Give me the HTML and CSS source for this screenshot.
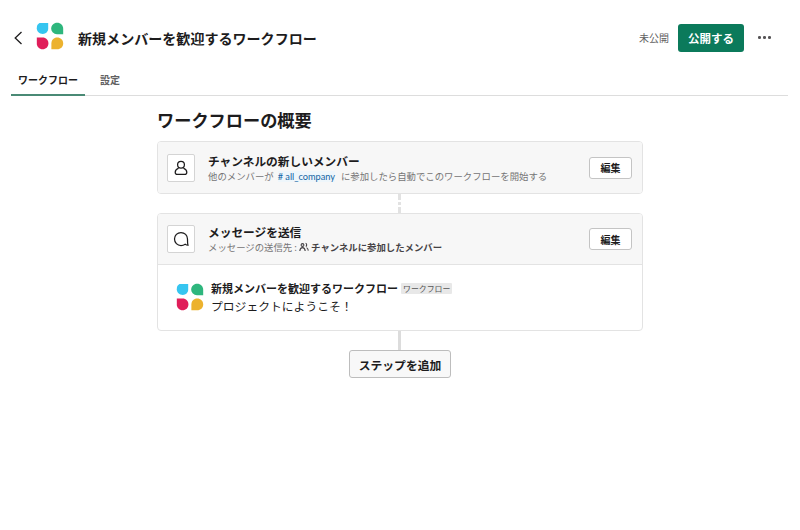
FILE: index.html
```html
<!DOCTYPE html>
<html lang="ja">
<head>
<meta charset="utf-8">
<title>ワークフロー</title>
<link rel="stylesheet" href="styles.css">
</head>
<body>
<svg class="defs" width="0" height="0" aria-hidden="true">
  <symbol id="logo" viewBox="0 0 28 28">
    <path d="M3.5 1H12.2V6.5C12.2 9.7 9.8 11.9 6.8 11.9C3.3 11.9 .8 9.5 .8 6.3C.8 3.7 1.5 2.1 3.5 1Z" fill="#36c5f0"/>
    <path d="M21.2 .8C24.6 .8 27.2 3.4 27.2 6.8V12.2H21C17.6 12.2 15.2 9.6 15.2 6.6C15.2 3.2 17.8 .8 21.2 .8Z" fill="#2eb67d"/>
    <path d="M.8 15.6H6.6C10 15.6 12.4 18.2 12.4 21.4C12.4 24.8 9.8 27.2 6.6 27.2C3.2 27.2 .8 24.6 .8 21.4Z" fill="#e01e5a"/>
    <path d="M21.2 15.6C24.6 15.6 27.2 18.2 27.2 21.4C27.2 24.8 24.6 27.2 21.2 27.2H15.4V21.4C15.4 18.2 17.8 15.6 21.2 15.6Z" fill="#ecb22e"/>
  </symbol>
</svg>

<header class="top">
  <svg class="back" width="10" height="16" viewBox="0 0 10 16"><path d="M8.5 2 2.2 8 8.5 14" fill="none" stroke="#1d1c1d" stroke-width="1.3"/></svg>
  <svg class="logo"><use href="#logo"/></svg>
  <h1 class="title">新規メンバーを歓迎するワークフロー</h1>
  <span class="status">未公開</span>
  <button class="publish">公開する</button>
  <span class="more"><i></i><i></i><i></i></span>
</header>

<nav class="tabs">
  <span class="tab active">ワークフロー</span>
  <span class="tab">設定</span>
</nav>

<main class="content">
  <h2 class="heading">ワークフローの概要</h2>

  <section class="card">
    <div class="step">
      <span class="step-icon">
        <svg width="16" height="16" viewBox="0 0 16 16" fill="none" stroke="#1d1c1d" stroke-width="1.25"><circle cx="8" cy="4.8" r="3.4"/><path d="M5.6 8.1C3.6 9 2.2 10.4 2.2 12.2C2.2 13.6 3 14.4 4.2 14.4H11.8C13 14.4 13.8 13.6 13.8 12.2C13.8 10.4 12.4 9 10.4 8.1"/></svg>
      </span>
      <div class="step-text">
        <div class="step-title">チャンネルの新しいメンバー</div>
        <div class="step-sub">他のメンバーが<a class="channel"># all_company</a>に参加したら自動でこのワークフローを開始する</div>
      </div>
      <button class="edit">編集</button>
    </div>
  </section>

  <div class="link dotted"></div>

  <section class="card">
    <div class="step bordered">
      <span class="step-icon">
        <svg width="16" height="16" viewBox="0 0 16 16" fill="none" stroke="#1d1c1d" stroke-width="1.25"><path d="M12.2 13.2C11 14 9.6 14.5 8 14.5C4.3 14.5 1.5 11.6 1.5 8C1.5 4.4 4.3 1.5 8 1.5C11.7 1.5 14.5 4.4 14.5 8C14.5 9.8 14.4 12.4 15 14.2C14 14.2 13 13.8 12.2 13.2Z"/></svg>
      </span>
      <div class="step-text">
        <div class="step-title">メッセージを送信</div>
        <div class="step-sub">メッセージの送信先 :
          <svg class="people" width="10" height="10" viewBox="0 0 10 10" fill="none" stroke="#454245" stroke-width="1.1"><circle cx="3.5" cy="3" r="1.4"/><path d="M.8 9C1 6.8 2 5.6 3.5 5.6C5 5.6 6 6.8 6.2 9M6.6 1.2C8 1.6 8 4 6.8 4.6M7.6 5.6C8.6 6.2 9.2 7.4 9.3 8.6"/></svg>
          <b>チャンネルに参加したメンバー</b></div>
      </div>
      <button class="edit">編集</button>
    </div>
    <div class="message">
      <svg class="msg-logo"><use href="#logo"/></svg>
      <div class="msg-body">
        <div class="msg-head"><b class="msg-name">新規メンバーを歓迎するワークフロー</b><span class="badge">ワークフロー</span></div>
        <div class="msg-text">プロジェクトにようこそ！</div>
      </div>
    </div>
  </section>

  <div class="link"></div>
  <button class="add">ステップを追加</button>
</main>
</body>
</html>
```
FILE: styles.css
```css
* { box-sizing: border-box; }
html, body { margin: 0; padding: 0; }
body {
  width: 800px;
  height: 530px;
  overflow: hidden;
  background: #fff;
  color: #1d1c1d;
  font-family: "Noto Sans CJK JP", "Noto Sans", sans-serif;
}
.defs { position: absolute; }
button { font-family: inherit; cursor: pointer; }

.top {
  display: flex;
  align-items: center;
  height: 75px;
  padding: 0 28px 0 13px;
}
.back { margin-right: 13px; flex: none; }
.logo { width: 28px; height: 28px; margin: 0 14px 4px 0; flex: none; }
.title { flex: 1; margin: 0; font-size: 14.06px; font-weight: 700; line-height: 20px; }
.status { font-size: 10px; color: #616061; margin-right: 9px; }
.publish {
  width: 66px;
  height: 28px;
  margin-right: 14px;
  padding: 0;
  border: 0;
  border-radius: 3px;
  background: #0b7a5b;
  color: #fff;
  font-size: 11.5px;
  font-weight: 700;
}
.more { display: flex; gap: 2.6px; width: 14px; }
.more i { width: 2.6px; height: 2.6px; border-radius: 50%; background: #555355; flex: none; }

.tabs {
  display: flex;
  gap: 8px;
  width: 777px;
  height: 21px;
  margin-left: 11px;
  border-bottom: 1px solid #dddddd;
}
.tab {
  height: 21px;
  padding: 0 7px;
  font-size: 10px;
  font-weight: 700;
  line-height: 10px;
  color: #616061;
}
.tab.active { color: #1d1c1d; border-bottom: 2px solid #4a8a75; }

.content {
  display: flex;
  flex-direction: column;
  align-items: center;
  width: 486px;
  margin-left: 157px;
}
.heading {
  align-self: flex-start;
  margin: 11px 0 9px;
  font-size: 17.2px;
  line-height: 25px;
  font-weight: 700;
}
.card {
  width: 486px;
  border: 1px solid #e3e3e3;
  border-radius: 4px;
  overflow: hidden;
  background: #fff;
}
.step {
  display: flex;
  align-items: center;
  height: 51px;
  padding: 0 9px;
  background: #f7f7f7;
}
.step.bordered { border-bottom: 1px solid #e3e3e3; }
.step-icon {
  display: flex;
  align-items: center;
  justify-content: center;
  width: 28px;
  height: 28px;
  margin-right: 13px;
  border: 1px solid #d4d4d4;
  border-radius: 2px;
  background: #fff;
  flex: none;
}
.step-text { flex: 1; min-width: 0; }
.step-title { font-size: 11.7px; font-weight: 700; line-height: 15px; }
.step-sub { margin-top: 2px; font-size: 9.4px; line-height: 13px; color: #757475; white-space: nowrap; }
.step-sub b { color: #454245; font-weight: 700; }
.channel { margin: 0 6px 0 4px; color: #1264a3; background: #eef6fb; font-family: Lato, sans-serif; font-size: 9.2px; }
.people { vertical-align: -1px; }
.edit {
  width: 43px;
  height: 22px;
  margin-right: 1px;
  padding: 0;
  border: 1px solid #c4c4c4;
  border-radius: 3px;
  background: #fff;
  color: #1d1c1d;
  font-size: 10px;
  font-weight: 700;
}

.link { width: 3px; height: 19px; margin-right: 1px; background: #dcdcdc; flex: none; }
.link.dotted {
  background: linear-gradient(#e2e2e2 0 6px, #fff 6px 8px, #e2e2e2 8px 11px, #fff 11px 13px, #e2e2e2 13px 19px);
}

.message {
  display: flex;
  height: 65px;
  padding: 19px 19px 0 18px;
}
.msg-logo { width: 28px; height: 28px; margin: -1px 7px 0 0; flex: none; }
.msg-head { display: flex; align-items: center; height: 11px; margin-top: -1px; }
.msg-name { font-size: 11px; font-weight: 700; line-height: 11px; }
.badge {
  margin-left: 3px;
  padding: 0 2px;
  height: 11px;
  border-radius: 1px;
  background: #e8e8e8;
  color: #555;
  font-size: 7.9px;
  line-height: 11px;
}
.msg-text { margin-top: 4px; font-size: 11.8px; line-height: 16px; color: #1d1c1d; }

.add {
  width: 102px;
  height: 28px;
  padding: 0;
  border: 1px solid #bdbdbd;
  border-radius: 3px;
  background: #f8f8f8;
  color: #1d1c1d;
  font-size: 11.8px;
  font-weight: 700;
}
```
